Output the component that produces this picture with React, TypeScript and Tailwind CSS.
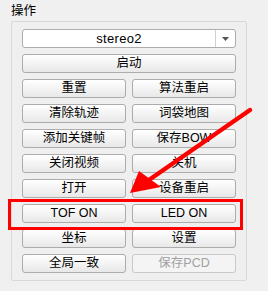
import React from "react";

const cjk = { fontFamily: '"Liberation Sans", "Noto Sans CJK SC", sans-serif' };

function Btn({ label, disabled }: { label: string; disabled?: boolean }) {
  return (
    <div
      className={
        "h-[19px] flex items-center justify-center rounded-[3px] border text-[12.5px] leading-none " +
        (disabled
          ? "border-[#c8c8c8] bg-[#f4f4f4] text-[#a0a0a0]"
          : "border-[#acacac] bg-gradient-to-b from-[#ffffff] to-[#e8e8e8] text-black")
      }
      style={cjk}
    >
      {label}
    </div>
  );
}

export default function App() {
  const rows: [string, string, boolean?][] = [
    ["重置", "算法重启"],
    ["清除轨迹", "词袋地图"],
    ["添加关键帧", "保存BOW"],
    ["关闭视频", "关机"],
    ["打开", "设备重启"],
    ["TOF ON", "LED ON"],
    ["坐标", "设置"],
    ["全局一致", "保存PCD", true],
  ];
  return (
    <div className="relative w-[268px] h-[291px] bg-[#f0f0f0] overflow-hidden" style={cjk}>
      <div className="pl-[11px] pt-[4px] h-[21px] text-[12.5px] leading-[14px] text-black">操作</div>
      <div className="ml-[11px] w-[236px] h-[260px] border border-[#d8d8d8] rounded-[2px] bg-[#efefef] px-[10px] pt-[7px] flex flex-col gap-[6px]">
        <div className="h-[19px] flex rounded-[3px] border border-[#acacac] bg-white">
          <div className="flex-1 flex items-center justify-center text-[13px] leading-none tracking-[0.3px]">stereo2</div>
          <div className="w-[20px] border-l border-[#d0d0d0] flex items-center justify-center">
            <svg width="7" height="4" viewBox="0 0 7 4">
              <polygon points="0,0 7,0 3.5,4" fill="#555" />
            </svg>
          </div>
        </div>
        <Btn label="启动" />
        {rows.map(([a, b, d]) => (
          <div key={a} className="grid grid-cols-2 gap-[6px]">
            <Btn label={a} />
            <Btn label={b} disabled={d} />
          </div>
        ))}
      </div>
      <div className="absolute left-[8px] top-[199px] w-[235px] h-[31px] border-[3px] border-[#ff0000]" />
      <svg className="absolute left-0 top-0" width="268" height="291" viewBox="0 0 268 291">
        <line x1="250" y1="110" x2="146" y2="182" stroke="#ff0000" strokeWidth="4.5" strokeLinecap="round" />
        <polygon points="130,193 139,171 161,187" fill="#ff0000" />
      </svg>
    </div>
  );
}
